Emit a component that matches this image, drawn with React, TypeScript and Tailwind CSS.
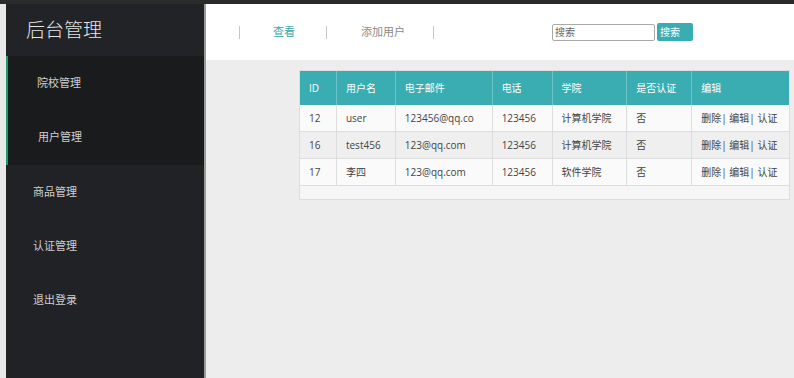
import React from "react";

const rows = [
  { id: "12", name: "user", email: "123456@qq.co", phone: "123456", college: "计算机学院", cert: "否" },
  { id: "16", name: "test456", email: "123@qq.com", phone: "123456", college: "计算机学院", cert: "否" },
  { id: "17", name: "李四", email: "123@qq.com", phone: "123456", college: "软件学院", cert: "否" },
];

const cols = [
  { label: "ID", w: "w-[37px]" },
  { label: "用户名", w: "w-[59px]" },
  { label: "电子邮件", w: "w-[97px]" },
  { label: "电话", w: "w-[60px]" },
  { label: "学院", w: "w-[75px]" },
  { label: "是否认证", w: "w-[65px]" },
  { label: "编辑", w: "w-[97px]" },
];

function Sep() {
  return <div className="w-px h-[13px] bg-[#c4c4c4]" />;
}

export default function App() {
  const font = { fontFamily: '"Open Sans", "Noto Sans CJK SC", sans-serif' };
  return (
    <div className="w-[794px] h-[378px] bg-[#ededed] flex flex-col overflow-hidden" style={font}>
      <div className="h-[4px] bg-[#2b2b2b] shrink-0" />
      <div className="flex flex-1 min-h-0">
        <div className="w-[6px] bg-[#e8e8e8] shrink-0" />
        <aside className="w-[198px] bg-[#212226] flex flex-col shrink-0">
          <div className="h-[52px] bg-[#222327] flex items-center pl-[20px] text-[19px] font-light text-[#e6e6e6]">后台管理</div>
          <div className="border-l-[2px] border-[#1f9a6d] bg-[#1a1b1d]">
            <div className="h-[54px] flex items-center pl-[29px] text-[11px] text-[#cfcfcf]">院校管理</div>
            <div className="h-[55px] flex items-center pl-[30px] text-[11px] text-[#cfcfcf]">用户管理</div>
          </div>
          <div className="h-[54px] flex items-center pl-[27px] text-[11px] text-[#cfcfcf]">商品管理</div>
          <div className="h-[54px] flex items-center pl-[27px] text-[11px] text-[#cfcfcf]">认证管理</div>
          <div className="h-[54px] flex items-center pl-[27px] text-[11px] text-[#cfcfcf]">退出登录</div>
        </aside>
        <div className="w-[2px] bg-[#9a9a9a] shrink-0" />
        <main className="flex-1 flex flex-col min-w-0">
          <header className="h-[56px] bg-white flex items-center text-[11px] shrink-0">
            <div className="ml-[33px]"><Sep /></div>
            <span className="ml-[33px] text-[#3aa9ab]">查看</span>
            <div className="ml-[31px]"><Sep /></div>
            <span className="ml-[34px] text-[#8a8a8a]">添加用户</span>
            <div className="ml-[28px]"><Sep /></div>
            <div className="ml-[118px] flex items-center">
              <input
                placeholder="搜索"
                className="w-[103px] h-[17px] border border-[#a9a9a9] rounded-[2px] px-[2px] text-[10px] text-[#555] placeholder:text-[#666] bg-white outline-none"
                style={font}
              />
              <button className="ml-[2px] w-[36px] h-[18px] bg-[#3aadb2] text-white text-[10px] text-left pl-[3px] rounded-[2px]">搜索</button>
            </div>
          </header>
          <div className="pt-[10px] pl-[93px]">
            <div className="w-[491px] border border-[#dedede] bg-[#f6f6f6]">
              <div className="flex h-[34px] bg-[#3aadb2] text-white text-[10px]">
                {cols.map((c, i) => (
                  <div key={i} className={`${c.w} flex items-center pl-[9px] ${i < cols.length - 1 ? "border-r border-[#6cc4c8]" : ""}`}>{c.label}</div>
                ))}
              </div>
              {rows.map((r, ri) => {
                const cells = [r.id, r.name, r.email, r.phone, r.college, r.cert, "删除| 编辑| 认证"];
                return (
                  <div key={ri} className={`flex h-[27px] text-[10px] text-[#444] border-b border-[#dddddd] ${ri === 1 ? "bg-[#efefef]" : "bg-[#fafafa]"}`}>
                    {cells.map((v, i) => (
                      <div key={i} className={`${cols[i].w} flex items-center pl-[9px] ${i < cols.length - 1 ? "border-r border-[#dddddd]" : ""} whitespace-nowrap overflow-hidden`}>{v}</div>
                    ))}
                  </div>
                );
              })}
              <div className="h-[13px]" />
            </div>
          </div>
        </main>
      </div>
    </div>
  );
}
